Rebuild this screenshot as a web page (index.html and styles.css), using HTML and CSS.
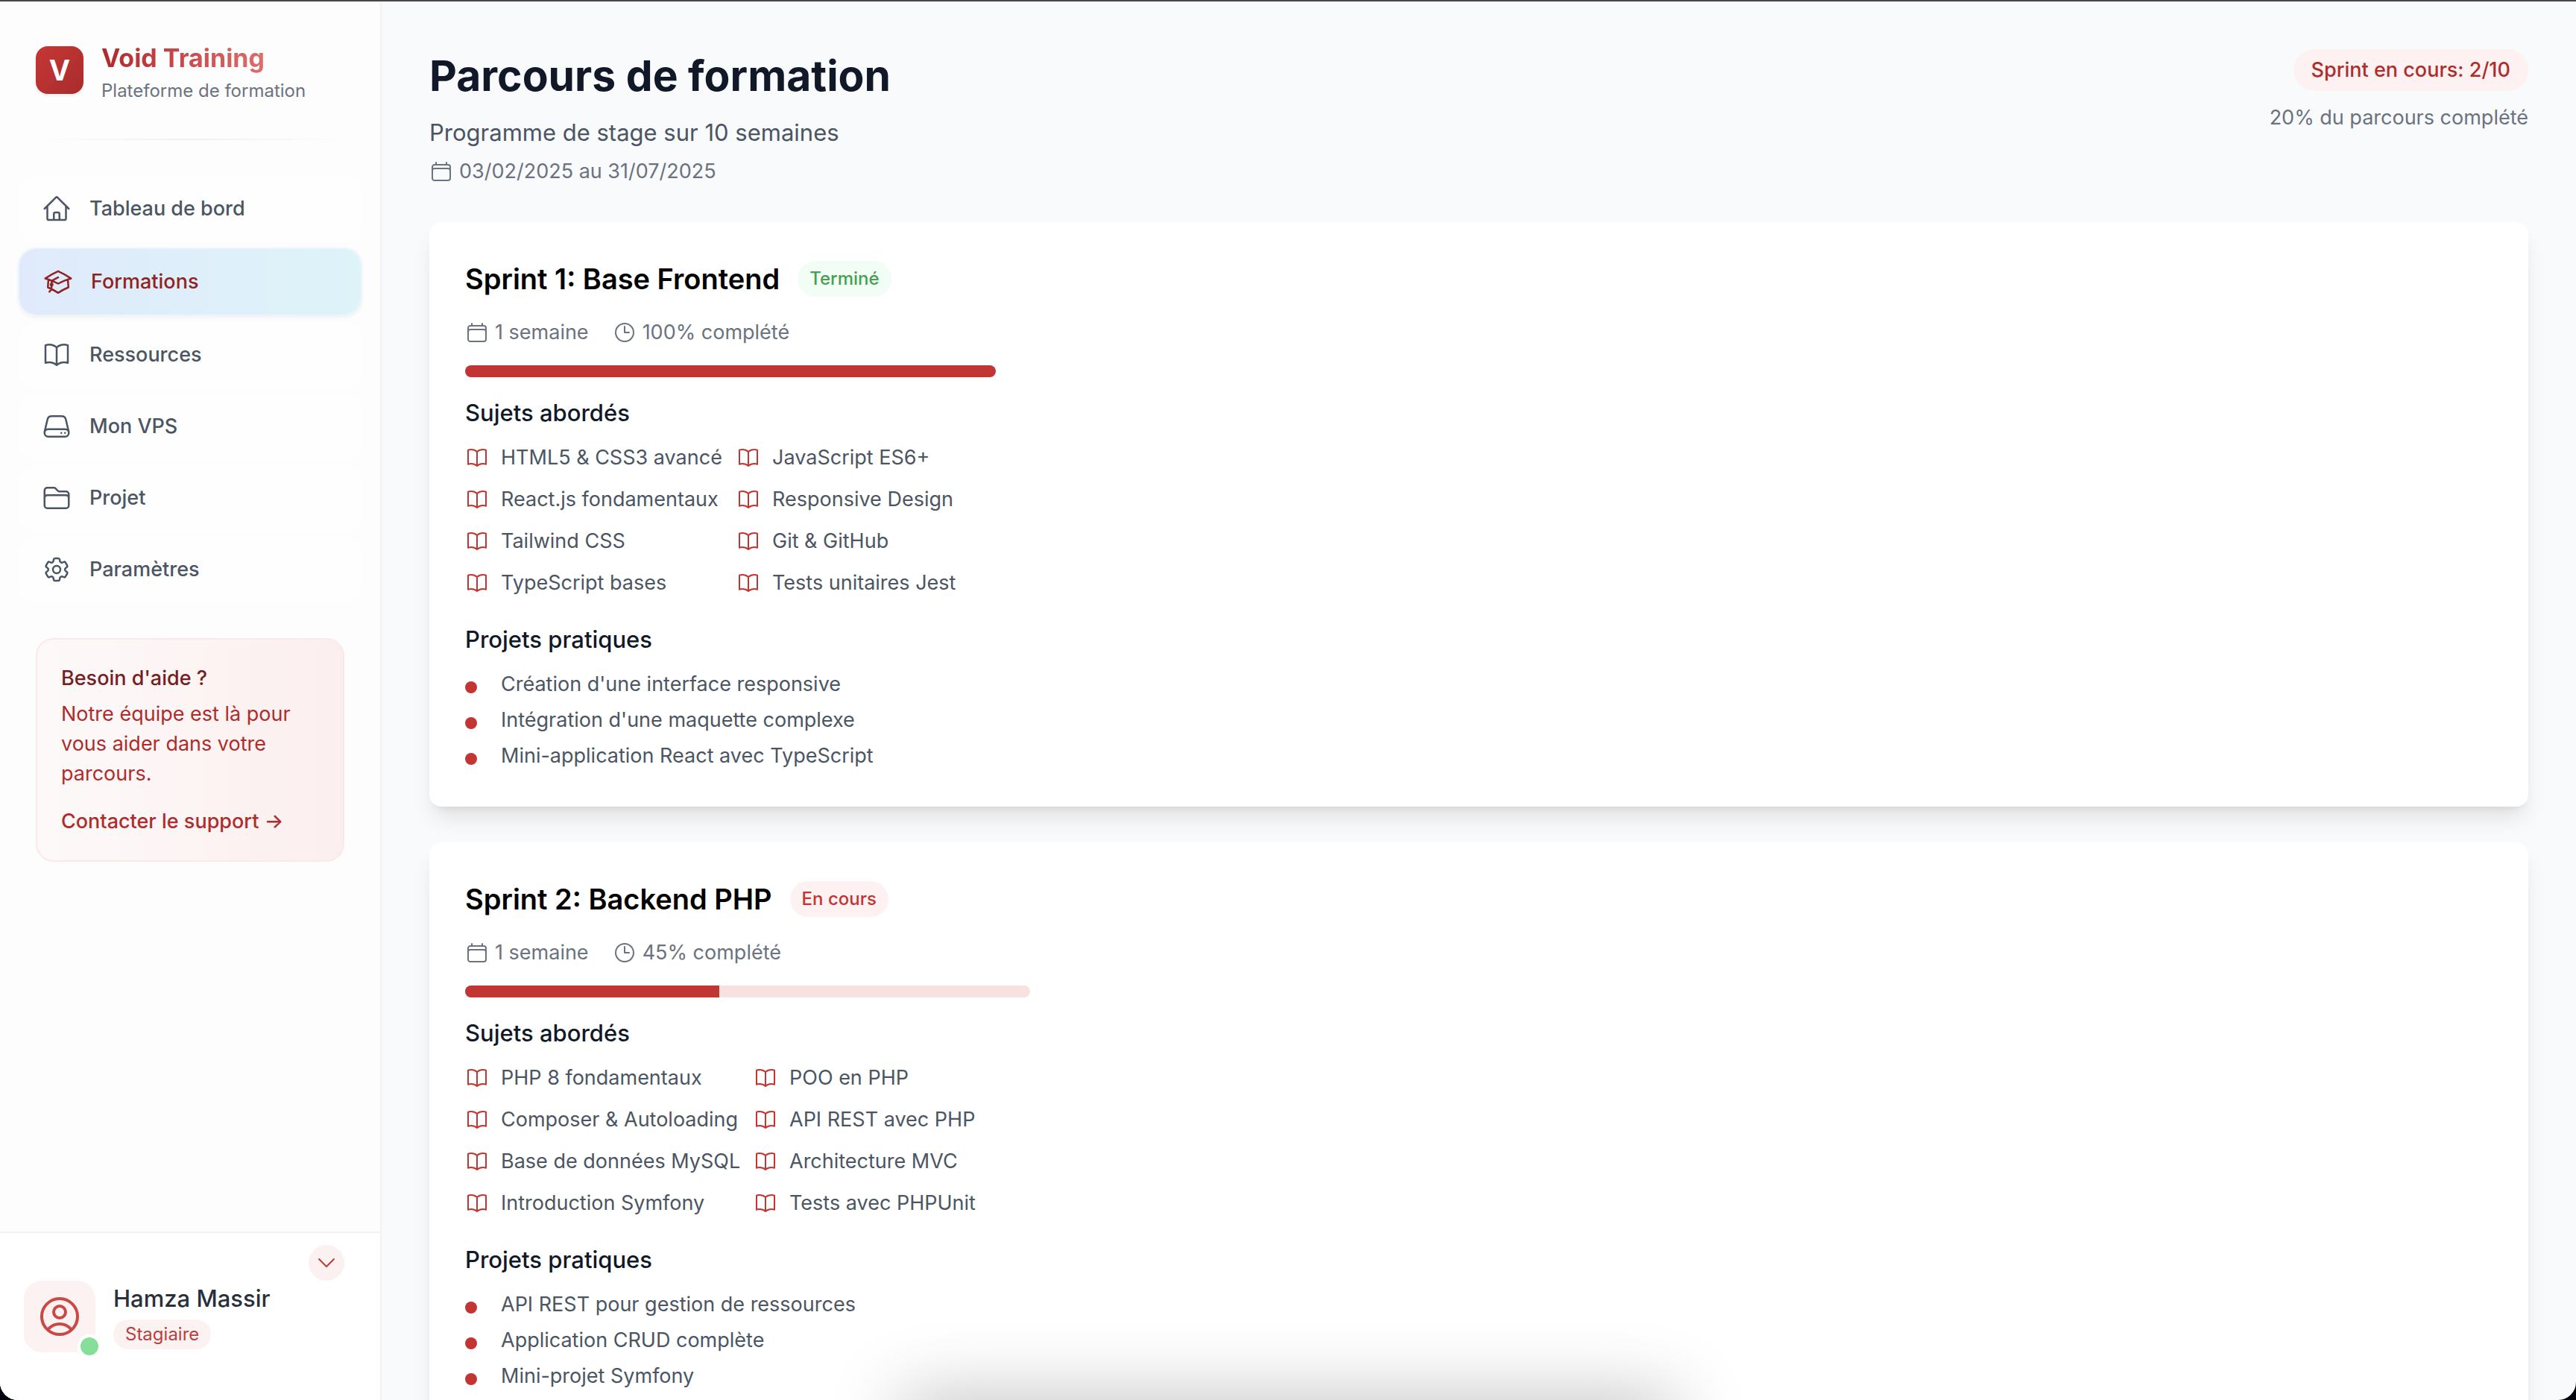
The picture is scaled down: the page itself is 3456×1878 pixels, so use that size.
FILE: index.html
```html
<!DOCTYPE html>
<html lang="fr">
<head>
<meta charset="utf-8">
<meta name="viewport" content="width=device-width, initial-scale=1">
<title>Void Training – Parcours de formation</title>
<link rel="stylesheet" href="styles.css">
</head>
<body>
<svg class="sprite" aria-hidden="true">
  <symbol id="home" viewBox="0 0 24 24"><path d="M2.25 12l8.954-8.955c.44-.439 1.152-.439 1.591 0L21.75 12M4.5 9.75v10.125c0 .621.504 1.125 1.125 1.125H9.75v-4.875c0-.621.504-1.125 1.125-1.125h2.25c.621 0 1.125.504 1.125 1.125V21h4.125c.621 0 1.125-.504 1.125-1.125V9.75M8.25 21h8.25"/></symbol>
  <symbol id="cap" viewBox="0 0 24 24"><path d="M4.26 10.147a60.436 60.436 0 00-.491 6.347A48.627 48.627 0 0112 20.904a48.627 48.627 0 018.232-4.41 60.46 60.46 0 00-.491-6.347m-15.482 0a50.57 50.57 0 00-2.658-.813A59.905 59.905 0 0112 3.493a59.902 59.902 0 0110.399 5.84c-.896.248-1.783.52-2.658.814m-15.482 0A50.697 50.697 0 0112 13.489a50.702 50.702 0 017.74-3.342M6.75 15a.75.75 0 100-1.5.75.75 0 000 1.5zm0 0v-3.675A55.378 55.378 0 0112 8.443m-7.007 11.55A5.981 5.981 0 006.75 15.75v-1.5"/></symbol>
  <symbol id="book" viewBox="0 0 24 24"><path d="M12 6.042A8.967 8.967 0 006 3.75c-1.052 0-2.062.18-3 .512v14.25A8.987 8.987 0 016 18c2.305 0 4.408.867 6 2.292m0-14.25a8.966 8.966 0 016-2.292c1.052 0 2.062.18 3 .512v14.25A8.987 8.987 0 0018 18a8.967 8.967 0 00-6 2.292m0-14.25v14.25"/></symbol>
  <symbol id="server" viewBox="0 0 24 24"><path d="M21.75 17.25v-.228a4.5 4.5 0 00-.12-1.03l-2.268-9.64a3.375 3.375 0 00-3.285-2.602H7.923a3.375 3.375 0 00-3.285 2.602l-2.268 9.64a4.5 4.5 0 00-.12 1.03v.228m19.5 0a3 3 0 01-3 3H5.25a3 3 0 01-3-3m19.5 0a3 3 0 00-3-3H5.25a3 3 0 00-3 3m16.5 0h.008v.008h-.008v-.008zm-3 0h.008v.008h-.008v-.008z"/></symbol>
  <symbol id="folder" viewBox="0 0 24 24"><path d="M2.25 12.75V12A2.25 2.25 0 014.5 9.75h15A2.25 2.25 0 0121.75 12v.75m-8.69-6.44l-2.12-2.12a1.5 1.5 0 00-1.061-.44H4.5A2.25 2.25 0 002.25 6v12a2.25 2.25 0 002.25 2.25h15A2.25 2.25 0 0021.75 18V9a2.25 2.25 0 00-2.25-2.25h-5.379a1.5 1.5 0 01-1.06-.44z"/></symbol>
  <symbol id="cog" viewBox="0 0 24 24"><path d="M9.594 3.94c.09-.542.56-.94 1.11-.94h2.593c.55 0 1.02.398 1.11.94l.213 1.281c.063.374.313.686.645.87.074.04.147.083.22.127.324.196.72.257 1.075.124l1.217-.456a1.125 1.125 0 011.37.49l1.296 2.247a1.125 1.125 0 01-.26 1.431l-1.003.827c-.293.24-.438.613-.431.992a6.759 6.759 0 010 .255c-.007.378.138.75.43.99l1.005.828c.424.35.534.954.26 1.43l-1.298 2.247a1.125 1.125 0 01-1.369.491l-1.217-.456c-.355-.133-.75-.072-1.076.124a6.57 6.57 0 01-.22.128c-.331.183-.581.495-.644.869l-.213 1.28c-.09.543-.56.941-1.11.941h-2.594c-.55 0-1.02-.398-1.11-.94l-.213-1.281c-.062-.374-.312-.686-.644-.87a6.52 6.52 0 01-.22-.127c-.325-.196-.72-.257-1.076-.124l-1.217.456a1.125 1.125 0 01-1.369-.49l-1.297-2.247a1.125 1.125 0 01.26-1.431l1.004-.827c.292-.24.437-.613.43-.992a6.932 6.932 0 010-.255c.007-.378-.138-.75-.43-.99l-1.004-.828a1.125 1.125 0 01-.26-1.43l1.297-2.247a1.125 1.125 0 011.37-.491l1.216.456c.356.133.751.072 1.076-.124.072-.044.146-.087.22-.128.332-.183.582-.495.644-.869l.214-1.281z"/><path d="M15 12a3 3 0 11-6 0 3 3 0 016 0z"/></symbol>
  <symbol id="calendar" viewBox="0 0 24 24"><path d="M6.75 3v2.25M17.25 3v2.25M3 18.75V7.5a2.25 2.25 0 012.25-2.25h13.5A2.25 2.25 0 0121 7.5v11.25m-18 0A2.25 2.25 0 005.25 21h13.5A2.25 2.25 0 0021 18.75m-18 0v-7.5A2.25 2.25 0 015.25 9h13.5A2.25 2.25 0 0121 11.25v7.5"/></symbol>
  <symbol id="clock" viewBox="0 0 24 24"><path d="M12 6v6h4.5m4.5 0a9 9 0 11-18 0 9 9 0 0118 0z"/></symbol>
  <symbol id="user" viewBox="0 0 24 24"><path d="M17.982 18.725A7.488 7.488 0 0012 15.75a7.488 7.488 0 00-5.982 2.975m11.963 0a9 9 0 10-11.963 0m11.963 0A8.966 8.966 0 0112 21a8.966 8.966 0 01-5.982-2.275M15 9.75a3 3 0 11-6 0 3 3 0 016 0z"/></symbol>
  <symbol id="chevron" viewBox="0 0 24 24"><path d="M19.5 8.25l-7.5 7.5-7.5-7.5"/></symbol>
</svg>

<div class="app">
  <aside class="sidebar">
    <div class="sidebar-top">
      <div class="brand">
        <span class="brand-logo">V</span>
        <div>
          <p class="brand-name">Void Training</p>
          <p class="brand-sub">Plateforme de formation</p>
        </div>
      </div>
      <div class="divider"></div>
      <nav class="nav" aria-label="Navigation principale">
        <a class="nav-item" href="#tableau"><svg class="icon icon-md"><use href="#home"/></svg>Tableau de bord</a>
        <a class="nav-item nav-item--active" href="#formations" aria-current="page"><svg class="icon icon-md"><use href="#cap"/></svg>Formations</a>
        <a class="nav-item" href="#ressources"><svg class="icon icon-md"><use href="#book"/></svg>Ressources</a>
        <a class="nav-item" href="#vps"><svg class="icon icon-md"><use href="#server"/></svg>Mon VPS</a>
        <a class="nav-item" href="#projet"><svg class="icon icon-md"><use href="#folder"/></svg>Projet</a>
        <a class="nav-item" href="#parametres"><svg class="icon icon-md"><use href="#cog"/></svg>Paramètres</a>
      </nav>
      <section class="help">
        <h2 class="help-title">Besoin d'aide ?</h2>
        <p class="help-text">Notre équipe est là pour vous aider dans votre parcours.</p>
        <a class="help-link" href="#support">Contacter le support →</a>
      </section>
    </div>
    <div class="profile">
      <button class="profile-toggle" type="button" aria-label="Ouvrir le menu du profil"><svg class="icon icon-xs"><use href="#chevron"/></svg></button>
      <div class="avatar"><svg class="icon icon-lg"><use href="#user"/></svg><span class="status"></span></div>
      <div class="profile-info">
        <p class="profile-name">Hamza Massir</p>
        <span class="role">Stagiaire</span>
      </div>
    </div>
  </aside>

  <main class="main">
    <header class="page-header">
      <div>
        <h1 class="page-title">Parcours de formation</h1>
        <p class="page-sub">Programme de stage sur 10 semaines</p>
        <p class="meta-item"><svg class="icon icon-sm"><use href="#calendar"/></svg>03/02/2025 au 31/07/2025</p>
      </div>
      <div class="page-status">
        <span class="pill">Sprint en cours: 2/10</span>
        <p class="page-progress">20% du parcours complété</p>
      </div>
    </header>

    <article class="card">
      <div class="card-head">
        <h2 class="card-title">Sprint 1: Base Frontend</h2>
        <span class="badge badge--done">Terminé</span>
      </div>
      <div class="meta">
        <span class="meta-item"><svg class="icon icon-sm"><use href="#calendar"/></svg>1 semaine</span>
        <span class="meta-item"><svg class="icon icon-sm"><use href="#clock"/></svg>100% complété</span>
      </div>
      <div class="card-body">
        <div class="progress" role="progressbar" aria-label="Progression" aria-valuenow="100" aria-valuemin="0" aria-valuemax="100"><div class="progress-fill" style="width:100%"></div></div>
        <h3 class="section-title">Sujets abordés</h3>
        <ul class="topics">
          <li class="topic"><svg class="icon icon-sm"><use href="#book"/></svg>HTML5 &amp; CSS3 avancé</li>
          <li class="topic"><svg class="icon icon-sm"><use href="#book"/></svg>JavaScript ES6+</li>
          <li class="topic"><svg class="icon icon-sm"><use href="#book"/></svg>React.js fondamentaux</li>
          <li class="topic"><svg class="icon icon-sm"><use href="#book"/></svg>Responsive Design</li>
          <li class="topic"><svg class="icon icon-sm"><use href="#book"/></svg>Tailwind CSS</li>
          <li class="topic"><svg class="icon icon-sm"><use href="#book"/></svg>Git &amp; GitHub</li>
          <li class="topic"><svg class="icon icon-sm"><use href="#book"/></svg>TypeScript bases</li>
          <li class="topic"><svg class="icon icon-sm"><use href="#book"/></svg>Tests unitaires Jest</li>
        </ul>
        <h3 class="section-title">Projets pratiques</h3>
        <ul class="projects">
          <li class="project">Création d'une interface responsive</li>
          <li class="project">Intégration d'une maquette complexe</li>
          <li class="project">Mini-application React avec TypeScript</li>
        </ul>
      </div>
    </article>

    <article class="card">
      <div class="card-head">
        <h2 class="card-title">Sprint 2: Backend PHP</h2>
        <span class="badge badge--current">En cours</span>
      </div>
      <div class="meta">
        <span class="meta-item"><svg class="icon icon-sm"><use href="#calendar"/></svg>1 semaine</span>
        <span class="meta-item"><svg class="icon icon-sm"><use href="#clock"/></svg>45% complété</span>
      </div>
      <div class="card-body card-body--wide">
        <div class="progress" role="progressbar" aria-label="Progression" aria-valuenow="45" aria-valuemin="0" aria-valuemax="100"><div class="progress-fill" style="width:45%"></div></div>
        <h3 class="section-title">Sujets abordés</h3>
        <ul class="topics">
          <li class="topic"><svg class="icon icon-sm"><use href="#book"/></svg>PHP 8 fondamentaux</li>
          <li class="topic"><svg class="icon icon-sm"><use href="#book"/></svg>POO en PHP</li>
          <li class="topic"><svg class="icon icon-sm"><use href="#book"/></svg>Composer &amp; Autoloading</li>
          <li class="topic"><svg class="icon icon-sm"><use href="#book"/></svg>API REST avec PHP</li>
          <li class="topic"><svg class="icon icon-sm"><use href="#book"/></svg>Base de données MySQL</li>
          <li class="topic"><svg class="icon icon-sm"><use href="#book"/></svg>Architecture MVC</li>
          <li class="topic"><svg class="icon icon-sm"><use href="#book"/></svg>Introduction Symfony</li>
          <li class="topic"><svg class="icon icon-sm"><use href="#book"/></svg>Tests avec PHPUnit</li>
        </ul>
        <h3 class="section-title">Projets pratiques</h3>
        <ul class="projects">
          <li class="project">API REST pour gestion de ressources</li>
          <li class="project">Application CRUD complète</li>
          <li class="project">Mini-projet Symfony</li>
        </ul>
      </div>
    </article>
  </main>
  <div class="bottom-shade"></div>
</div>
</body>
</html>
```

FILE: styles.css
```css
*, *::before, *::after { box-sizing: border-box; }

html { background: #02020c; }

body {
  margin: 0;
  border-top: 2px solid #4b464d;
  font-family: Inter, "Liberation Sans", sans-serif;
  font-size: 27px;
  line-height: 40px;
  color: #4b5563;
}

h1, h2, h3, p, ul { margin: 0; padding: 0; }
ul { list-style: none; }
a { color: inherit; text-decoration: none; }

.sprite { display: none; }

.icon {
  flex: none;
  fill: none;
  stroke: currentColor;
  stroke-width: 1.5;
  stroke-linecap: round;
  stroke-linejoin: round;
}
.icon-xs { width: 32px; height: 32px; }
.icon-sm { width: 32px; height: 32px; }
.icon-md { width: 40px; height: 40px; }
.icon-lg { width: 64px; height: 64px; }

.app {
  position: relative;
  display: flex;
  height: calc(100vh - 2px);
  overflow: hidden;
  background: #f9fafc;
  border-radius: 0 0 24px 24px;
}

/* Sidebar */
.sidebar {
  flex: none;
  display: flex;
  flex-direction: column;
  justify-content: space-between;
  width: 512px;
  background: #fdfdfd;
  border-right: 2px solid #f1f2f4;
}

.brand {
  display: flex;
  align-items: center;
  gap: 24px;
  padding: 48px;
}
.brand-logo {
  display: grid;
  place-items: center;
  width: 64px;
  height: 64px;
  border-radius: 16px;
  background: linear-gradient(135deg, #c53734, #a92c2e);
  box-shadow: 0 2px 4px rgba(0, 0, 0, .08);
  color: #fff;
  font-size: 38px;
  font-weight: 700;
}
.brand-name {
  width: fit-content;
  font-size: 34px;
  font-weight: 700;
  line-height: 56px;
  background: linear-gradient(90deg, #b0292b, #e06c6c);
  background-clip: text;
  -webkit-background-clip: text;
  color: transparent;
}
.brand-sub { font-size: 24px; line-height: 32px; color: #6b7280; }

.divider {
  height: 2px;
  margin: 0 48px;
  background: linear-gradient(90deg, transparent, #eeeff1, transparent);
}

.nav {
  display: flex;
  flex-direction: column;
  gap: 8px;
  padding: 48px 24px;
}
.nav-item {
  display: flex;
  align-items: center;
  gap: 24px;
  padding: 24px 32px;
  border-radius: 24px;
  background: #fefefe;
  font-weight: 500;
}
.nav-item--active {
  border: 2px solid #edf5fc;
  background: linear-gradient(90deg, #e0eafc, #deeefa 45%, #def4f9) padding-box;
  box-shadow: 0 2px 4px rgba(0, 0, 0, .05);
  color: #8f2323;
}

.help {
  margin: 0 48px;
  padding: 32px;
  border: 2px solid #fbe9e9;
  border-radius: 24px;
  background: linear-gradient(90deg, #fdf9f9, #fdf3f3 60%, #fbeeee) padding-box;
  color: #ae2d2c;
}
.help-title { font-size: 27px; font-weight: 500; color: #742020; }
.help-text { margin: 8px 0 24px; }
.help-link { display: block; font-weight: 500; }

.profile {
  position: relative;
  display: flex;
  align-items: flex-start;
  gap: 24px;
  padding: 64px 32px;
  border-top: 2px solid #f1f2f4;
  background: #fff;
}
.profile-toggle {
  position: absolute;
  top: 16px;
  right: 48px;
  display: grid;
  place-items: center;
  width: 48px;
  height: 48px;
  padding: 0;
  border: 0;
  border-radius: 50%;
  background: #fcf1f1;
  color: #c43a38;
}
.avatar {
  position: relative;
  display: grid;
  place-items: center;
  width: 96px;
  height: 96px;
  border-radius: 24px;
  background: #fcf2f2;
  color: #c94947;
}
.status {
  position: absolute;
  right: -8px;
  bottom: -8px;
  width: 32px;
  height: 32px;
  border: 4px solid #fff;
  border-radius: 50%;
  background: #86df98;
}
.profile-info { display: flex; flex-direction: column; align-items: flex-start; gap: 4px; }
.profile-name { font-size: 31px; font-weight: 500; line-height: 48px; color: #28303d; }
.role {
  padding: 0 16px;
  border-radius: 20px;
  background: #fcf2f2;
  font-size: 24px;
  color: #b8403f;
}

/* Main column */
.main {
  flex: 1;
  display: flex;
  flex-direction: column;
  gap: 48px;
  padding: 64px;
  overflow-y: auto;
  scrollbar-width: none;
}

.page-header { display: flex; justify-content: space-between; align-items: flex-start; }
.page-title { margin-bottom: 16px; font-size: 57px; font-weight: 700; line-height: 72px; color: #111827; }
.page-sub { margin-bottom: 8px; font-size: 31px; line-height: 48px; }
.page-status { display: flex; flex-direction: column; align-items: flex-end; gap: 16px; }
.page-progress { color: #6b7280; }
.pill {
  padding: 8px 24px;
  border-radius: 28px;
  background: #fdf1f1;
  color: #ae2d2c;
  font-weight: 500;
}

.meta { display: flex; gap: 32px; margin: 24px 0; }
.meta-item { display: flex; align-items: center; gap: 8px; color: #6b7280; }

.card {
  flex: none;
  padding: 48px;
  border-radius: 16px;
  background: #fff;
  box-shadow: 0 20px 30px -6px rgba(0, 0, 0, .1), 0 8px 12px -8px rgba(0, 0, 0, .1);
}
.card-head { display: flex; align-items: center; gap: 24px; }
.card-title { font-size: 38px; font-weight: 600; line-height: 56px; color: #000; }

.badge {
  padding: 4px 16px;
  border-radius: 24px;
  font-size: 24px;
  font-weight: 500;
}
.badge--done { background: #f1fdf5; color: #45a04f; }
.badge--current { background: #fdf1f1; color: #c13533; }

.card-body { width: 712px; }
.card-body--wide { width: 758px; }

.progress {
  height: 16px;
  margin-bottom: 24px;
  overflow: hidden;
  border-radius: 8px;
  background: #f8e1e1;
}
.progress-fill { height: 100%; background: #c13533; }

.section-title { margin-bottom: 16px; font-size: 31px; font-weight: 500; line-height: 48px; color: #111827; }

.topics {
  display: grid;
  grid-template-columns: 1fr 1fr;
  gap: 16px;
  margin-bottom: 32px;
}
.topic { display: flex; align-items: center; gap: 16px; white-space: nowrap; }
.topic .icon { color: #c13533; }

.projects { display: grid; gap: 8px; }
.project { display: flex; gap: 32px; }
.project::before {
  content: "";
  flex: none;
  width: 16px;
  height: 16px;
  margin-top: 16px;
  border-radius: 50%;
  background: #c13533;
}

/* Soft shade rising from the bottom edge of the window */
.bottom-shade {
  position: absolute;
  top: 100%;
  left: 35%;
  right: 35%;
  height: 80px;
  box-shadow: 0 0 100px rgba(0, 0, 0, .28);
}
```
